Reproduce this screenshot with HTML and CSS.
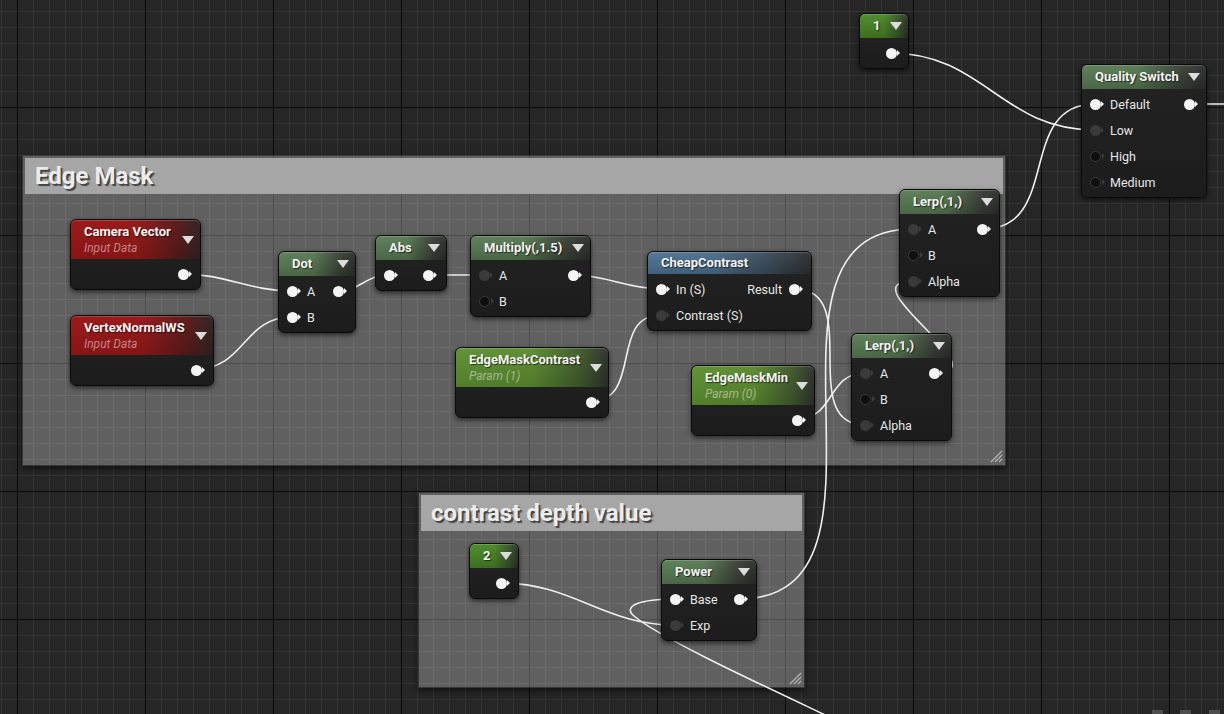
FILE: index.html
```html
<!DOCTYPE html>
<html>
<head>
<meta charset="utf-8">
<link rel="stylesheet" href="styles.css">
</head>
<body>
<div class="canvas">

  <div class="cmt cmt-edge">
    <div class="cmt-h">Edge Mask</div>
    <svg class="grip" width="14" height="14" viewBox="0 0 14 14"><path d="M2 13L13 2M6 13L13 6M10 13L13 10" stroke="#b4b4b4" stroke-width="1.2" fill="none"/></svg>
  </div>
  <div class="cmt cmt-depth">
    <div class="cmt-h">contrast depth value</div>
    <svg class="grip" width="14" height="14" viewBox="0 0 14 14"><path d="M2 13L13 2M6 13L13 6M10 13L13 10" stroke="#b4b4b4" stroke-width="1.2" fill="none"/></svg>
  </div>

  <svg class="wires" width="1224" height="714" viewBox="0 0 1224 714">
    <g fill="none" stroke="#eeeeee" stroke-width="1.6">
      <path d="M890 53 C984 53 1001 130 1095 130"/>
      <path d="M983 229 C1062 229 1016 104 1095 104"/>
      <path d="M1189 104 L1224 104"/>
      <path d="M183 274 C225 274 250 291 292 291"/>
      <path d="M196 369 C245 369 243 317 292 317"/>
      <path d="M338 291 C360 291 366 275 388 275"/>
      <path d="M429 275 L485 275"/>
      <path d="M573 275 C607 275 627 289 661 289"/>
      <path d="M591 401 C643 401 609 315 661 315"/>
      <path d="M795 289 C864 289 796 425 865 425"/>
      <path d="M797 419 C835 419 827 373 865 373"/>
      <path d="M935 373 C1003 373 845 281 913 281"/>
      <path d="M739 599 C920 599 732 229 913 229"/>
      <path d="M501 583 C573 583 603 625 675 625"/>
      <path d="M675 599 C640 599 622 606 634 616 C660 638 760 684 840 722"/>
    </g>
  </svg>

  <!-- Constant 1 -->
  <div class="node n-c1">
    <div class="hdr const"><span class="title">1</span><i class="dd"></i></div>
    <div class="body">
      <div class="row"><span class="fill"></span><span class="pin on"></span></div>
    </div>
  </div>

  <!-- Quality Switch -->
  <div class="node n-qs">
    <div class="hdr math"><span class="title">Quality Switch</span><i class="dd"></i></div>
    <div class="body">
      <div class="row"><span class="pin on"></span><span class="lbl">Default</span><span class="fill"></span><span class="pin on"></span></div>
      <div class="row"><span class="pin dim"></span><span class="lbl">Low</span></div>
      <div class="row"><span class="pin off"></span><span class="lbl">High</span></div>
      <div class="row"><span class="pin off"></span><span class="lbl">Medium</span></div>
    </div>
  </div>

  <!-- Camera Vector -->
  <div class="node n-cam">
    <div class="hdr tall input"><span class="tblock"><span class="title">Camera Vector</span><span class="sub sub-in">Input Data</span></span><i class="dd"></i></div>
    <div class="body">
      <div class="row"><span class="fill"></span><span class="pin on"></span></div>
    </div>
  </div>

  <!-- VertexNormalWS -->
  <div class="node n-vn">
    <div class="hdr tall input"><span class="tblock"><span class="title">VertexNormalWS</span><span class="sub sub-in">Input Data</span></span><i class="dd"></i></div>
    <div class="body">
      <div class="row"><span class="fill"></span><span class="pin on"></span></div>
    </div>
  </div>

  <!-- Dot -->
  <div class="node n-dot">
    <div class="hdr math"><span class="title">Dot</span><i class="dd"></i></div>
    <div class="body">
      <div class="row"><span class="pin on"></span><span class="lbl">A</span><span class="fill"></span><span class="pin on"></span></div>
      <div class="row"><span class="pin on"></span><span class="lbl">B</span></div>
    </div>
  </div>

  <!-- Abs -->
  <div class="node n-abs">
    <div class="hdr math"><span class="title">Abs</span><i class="dd"></i></div>
    <div class="body">
      <div class="row"><span class="pin on"></span><span class="fill"></span><span class="pin on"></span></div>
    </div>
  </div>

  <!-- Multiply -->
  <div class="node n-mul">
    <div class="hdr math"><span class="title">Multiply(,1.5)</span><i class="dd"></i></div>
    <div class="body">
      <div class="row"><span class="pin dim"></span><span class="lbl">A</span><span class="fill"></span><span class="pin on"></span></div>
      <div class="row"><span class="pin off"></span><span class="lbl">B</span></div>
    </div>
  </div>

  <!-- CheapContrast -->
  <div class="node n-cc">
    <div class="hdr func short"><span class="title">CheapContrast</span></div>
    <div class="body">
      <div class="row"><span class="pin on"></span><span class="lbl">In (S)</span><span class="fill"></span><span class="lbl rl">Result</span><span class="pin on"></span></div>
      <div class="row"><span class="pin dim"></span><span class="lbl">Contrast (S)</span></div>
    </div>
  </div>

  <!-- EdgeMaskContrast -->
  <div class="node n-emc">
    <div class="hdr tall param"><span class="tblock"><span class="title">EdgeMaskContrast</span><span class="sub sub-p">Param (1)</span></span><i class="dd"></i></div>
    <div class="body">
      <div class="row"><span class="fill"></span><span class="pin on"></span></div>
    </div>
  </div>

  <!-- EdgeMaskMin -->
  <div class="node n-emm">
    <div class="hdr tall param"><span class="tblock"><span class="title">EdgeMaskMin</span><span class="sub sub-p">Param (0)</span></span><i class="dd"></i></div>
    <div class="body">
      <div class="row"><span class="fill"></span><span class="pin on"></span></div>
    </div>
  </div>

  <!-- Lerp top -->
  <div class="node n-l1">
    <div class="hdr math"><span class="title">Lerp(,1,)</span><i class="dd"></i></div>
    <div class="body">
      <div class="row"><span class="pin dim"></span><span class="lbl">A</span><span class="fill"></span><span class="pin on"></span></div>
      <div class="row"><span class="pin off"></span><span class="lbl">B</span></div>
      <div class="row"><span class="pin dim"></span><span class="lbl">Alpha</span></div>
    </div>
  </div>

  <!-- Lerp bottom -->
  <div class="node n-l2">
    <div class="hdr math"><span class="title">Lerp(,1,)</span><i class="dd"></i></div>
    <div class="body">
      <div class="row"><span class="pin dim"></span><span class="lbl">A</span><span class="fill"></span><span class="pin on"></span></div>
      <div class="row"><span class="pin off"></span><span class="lbl">B</span></div>
      <div class="row"><span class="pin dim"></span><span class="lbl">Alpha</span></div>
    </div>
  </div>

  <!-- Constant 2 -->
  <div class="node n-c2">
    <div class="hdr const"><span class="title">2</span><i class="dd"></i></div>
    <div class="body">
      <div class="row"><span class="fill"></span><span class="pin on"></span></div>
    </div>
  </div>

  <!-- Power -->
  <div class="node n-pow">
    <div class="hdr math"><span class="title">Power</span><i class="dd"></i></div>
    <div class="body">
      <div class="row"><span class="pin on"></span><span class="lbl">Base</span><span class="fill"></span><span class="pin on"></span></div>
      <div class="row"><span class="pin dim"></span><span class="lbl">Exp</span></div>
    </div>
  </div>

  <div class="stub s1"></div>
  <div class="stub s2"></div>
  <div class="stub s3"></div>
</div>
</body>
</html>
```

FILE: styles.css
```css
html, body {
  margin: 0;
  padding: 0;
  background: #262626;
  overflow: hidden;
}

.canvas {
  position: relative;
  width: 1224px;
  height: 714px;
  overflow: hidden;
  font-family: Roboto, "Liberation Sans", sans-serif;
  background-color: #262626;
  background-image:
    linear-gradient(to right, #0c0c0c 1px, transparent 1px),
    linear-gradient(to bottom, #0c0c0c 1px, transparent 1px),
    linear-gradient(to right, #343434 1px, transparent 1px),
    linear-gradient(to bottom, #343434 1px, transparent 1px);
  background-size: 128px 100%, 100% 128px, 16px 100%, 100% 16px;
  background-position: 17px 0, 0 107px, 1px 0, 0 11px;
}

/* comment boxes */
.cmt {
  position: absolute;
  box-sizing: border-box;
  padding: 2px 2px 0 2px;
  background: rgba(255, 255, 255, 0.27);
  border: 1px solid rgba(20, 20, 20, 0.55);
  box-shadow: 0 3px 6px rgba(0, 0, 0, 0.55);
}
.cmt-edge { left: 22px; top: 155px; width: 984px; height: 311px; }
.cmt-depth { left: 418px; top: 492px; width: 387px; height: 196px; }

.cmt-h {
  height: 36px;
  background: #a6a6a6;
  display: flex;
  align-items: center;
  padding-left: 10px;
  font-weight: 700;
  font-size: 24px;
  color: #ececec;
  text-shadow: 2px 2px 1px rgba(0, 0, 0, 0.6);
}

.grip {
  position: absolute;
  right: 2px;
  bottom: 2px;
}

.wires {
  position: absolute;
  left: 0;
  top: 0;
}

/* nodes */
.node {
  position: absolute;
  box-sizing: border-box;
  background: linear-gradient(to bottom, #222322, #1b1c1b);
  border: 1px solid #0a0a0a;
  border-radius: 6px;
  box-shadow: 0 2px 5px rgba(0, 0, 0, 0.6);
  color: #e8e8e8;
}

.hdr {
  height: 24px;
  box-sizing: border-box;
  display: flex;
  align-items: center;
  padding: 0 6px 0 13px;
  border-radius: 5px 5px 0 0;
  box-shadow: inset 0 1px 0 rgba(255, 255, 255, 0.18);
}
.hdr.short { height: 22px; }
.hdr.tall { height: 39px; }

.title {
  font-weight: 700;
  font-size: 13px;
  color: #f2f2f2;
  text-shadow: 1px 1px 1px rgba(0, 0, 0, 0.6);
  white-space: nowrap;
  line-height: 16px;
}
.tblock {
  display: flex;
  flex-direction: column;
}
.sub {
  font-style: italic;
  font-size: 12px;
  line-height: 16px;
  white-space: nowrap;
}
.sub-in { color: #c48585; }
.sub-p { color: #a3b98a; }

.dd {
  margin-left: auto;
  width: 0;
  height: 0;
  border-left: 6px solid transparent;
  border-right: 6px solid transparent;
  border-top: 8px solid #dcdcdc;
}

.math {
  background:
    linear-gradient(to bottom, rgba(255, 255, 255, 0.04), rgba(0, 0, 0, 0.18)),
    linear-gradient(to right, #5c7d57 0%, #587953 45%, #3a4238 80%, #2c2f2b 100%);
}
.const {
  background:
    linear-gradient(to bottom, rgba(255, 255, 255, 0.04), rgba(0, 0, 0, 0.2)),
    linear-gradient(to right, #4c8a28 0%, #4a8727 50%, #35512a 85%, #2c302b 100%);
}
.param {
  background:
    linear-gradient(to bottom, rgba(255, 255, 255, 0.03), rgba(0, 0, 0, 0.12)),
    linear-gradient(to right, #5e8f32 0%, #5b8b30 50%, #3f5a2c 82%, #2d312b 100%);
}
.input {
  background:
    linear-gradient(to bottom, rgba(255, 255, 255, 0.02), rgba(0, 0, 0, 0.12)),
    linear-gradient(to right, #9b1717 0%, #951818 50%, #5a1a1a 82%, #312323 100%);
}
.func {
  background:
    linear-gradient(to bottom, rgba(255, 255, 255, 0.04), rgba(0, 0, 0, 0.16)),
    linear-gradient(to right, #4f7393 0%, #4b6e8c 40%, #3a4a58 75%, #2c2f32 100%);
}

.body {
  padding: 2px 0 2px 0;
}
.row {
  height: 26px;
  display: flex;
  align-items: center;
  padding: 0 11px 0 8px;
}
.fill { flex: 1; }
.lbl {
  font-size: 12.5px;
  color: #e6e6e6;
  margin-left: 9px;
  white-space: nowrap;
}
.lbl.rl { margin-left: 0; margin-right: 7px; }

.pin {
  position: relative;
  width: 11px;
  height: 11px;
  border-radius: 50%;
  box-sizing: border-box;
  flex: none;
}
.pin::after {
  content: "";
  position: absolute;
  right: -3px;
  top: 50%;
  margin-top: -3px;
  border-top: 3px solid transparent;
  border-bottom: 3px solid transparent;
  border-left: 3px solid #f4f4f4;
}
.pin.on { background: #f4f4f4; }
.pin.dim { background: #3a3a3a; }
.pin.dim::after { border-left-color: #3a3a3a; }
.pin.off { background: #0e0e0e; border: 1.5px solid #3c3c3c; }
.pin.off::after { border-left-color: #3c3c3c; right: -4.5px; }

/* node placement on the graph canvas */
.n-c1 { left: 859px; top: 13px; width: 50px; }
.n-qs { left: 1081px; top: 64px; width: 126px; }
.n-cam { left: 70px; top: 219px; width: 131px; }
.n-vn { left: 70px; top: 315px; width: 144px; }
.n-dot { left: 278px; top: 251px; width: 78px; }
.n-abs { left: 375px; top: 235px; width: 72px; }
.n-abs .row { padding-right: 12px; }
.n-mul { left: 470px; top: 235px; width: 121px; }
.n-cc { left: 647px; top: 251px; width: 165px; }
.n-emc { left: 455px; top: 347px; width: 154px; }
.n-emm { left: 691px; top: 365px; width: 124px; }
.n-l1 { left: 899px; top: 189px; width: 101px; }
.n-l2 { left: 851px; top: 333px; width: 101px; }
.n-c2 { left: 469px; top: 543px; width: 50px; }
.n-pow { left: 661px; top: 559px; width: 96px; }

.stub {
  position: absolute;
  top: 710px;
  width: 11px;
  height: 4px;
  background: #4e4e4e;
}
.s1 { left: 1152px; }
.s2 { left: 1180px; }
.s3 { left: 1209px; }
```
